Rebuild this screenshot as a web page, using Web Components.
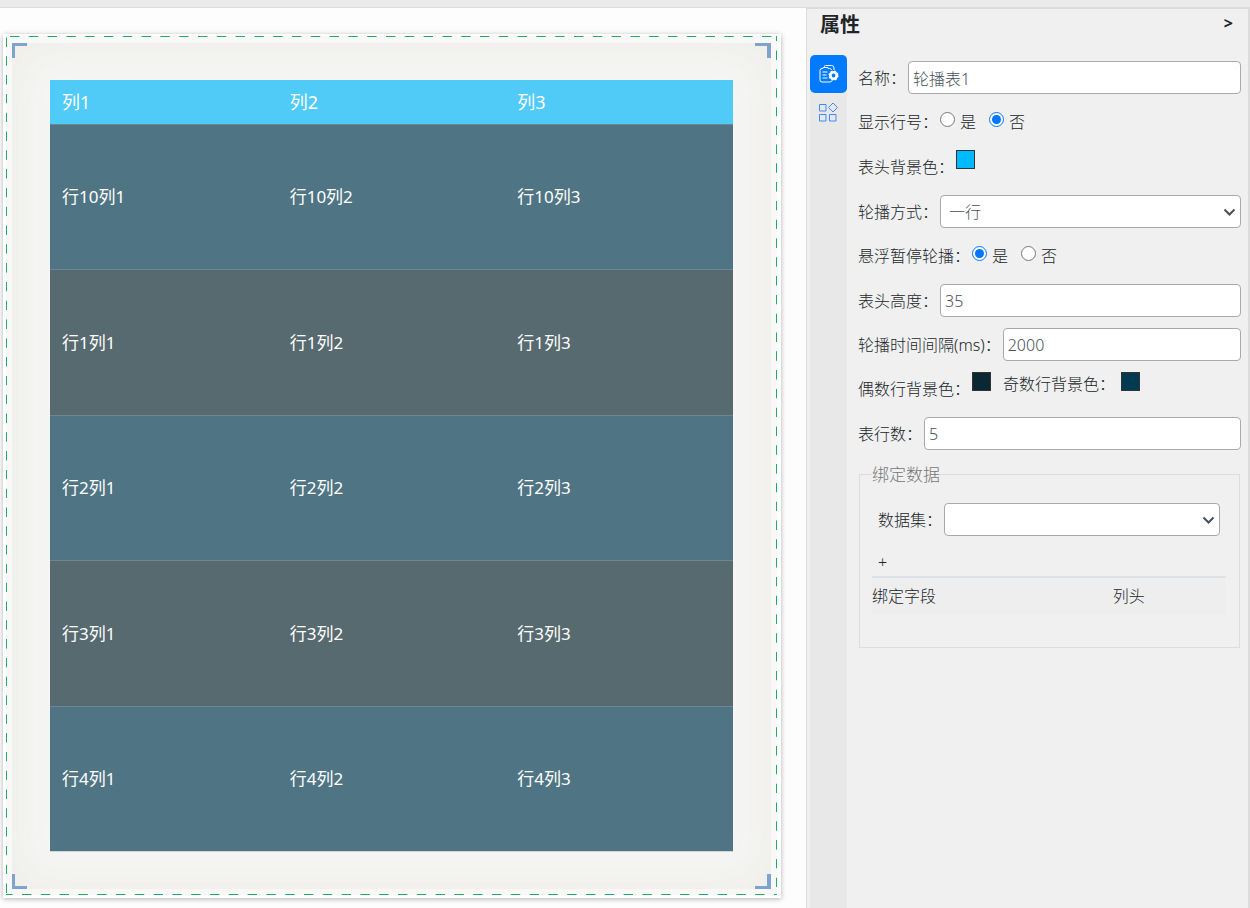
<!DOCTYPE html>
<html lang="zh-CN">
<head>
<meta charset="utf-8">
<title>属性</title>
<style>
  body {
    margin: 0;
    min-height: 100vh;
    display: flex;
    flex-direction: column;
    background: #fdfdfd;
    color: #212529;
    font: 300 16px/24px "Noto Sans", "Noto Sans CJK SC", sans-serif;
  }

  header {
    height: 7px;
    background: #ebebeb;
    border-bottom: 1px solid #dcdcdc;
  }

  main {
    flex: 1;
    display: flex;
  }

  design-canvas {
    flex: 1;
  }
</style>
</head>
<body>
<header></header>
<main>
  <design-canvas>
    <scroll-board></scroll-board>
  </design-canvas>
  <property-panel heading="属性">
    <prop-row label="名称："><prop-input value="轮播表1"></prop-input></prop-row>
    <prop-row label="显示行号："><prop-radio name="显示行号" selected="否"></prop-radio></prop-row>
    <prop-row label="表头背景色："><prop-color label="表头背景色" value="#00baff"></prop-color></prop-row>
    <prop-row label="轮播方式："><prop-select options="一行,整页"></prop-select></prop-row>
    <prop-row label="悬浮暂停轮播："><prop-radio name="悬浮暂停轮播" selected="是"></prop-radio></prop-row>
    <prop-row label="表头高度："><prop-input value="35"></prop-input></prop-row>
    <prop-row label="轮播时间间隔(ms)："><prop-input value="2000"></prop-input></prop-row>
    <prop-row label="偶数行背景色：">
      <prop-color label="偶数行背景色" value="#0a2732"></prop-color>
      <prop-color label="奇数行背景色" caption="奇数行背景色：" value="#003b51"></prop-color>
    </prop-row>
    <prop-row label="表行数："><prop-input value="5"></prop-input></prop-row>
    <bind-data></bind-data>
  </property-panel>
</main>

<script>
class DesignCanvas extends HTMLElement {
  constructor() {
    super();
    this.attachShadow({ mode: 'open' });
  }

  connectedCallback() {
    this.shadowRoot.innerHTML = `
    <style>
      :host { display: block; padding: 26px 25px 10px 3px; }
      .card {
        display: flex;
        background: #fff;
        padding: 2px 4px 3px 3px;
        box-shadow: 0 1px 5px rgba(0, 0, 0, .3);
      }
      .frame {
        flex: 1;
        position: relative;
        padding: 7px 6px 6px;
        background: #f8f8f8;
      }
      .outline {
        position: absolute;
        inset: 0;
        width: 100%;
        height: 100%;
        overflow: hidden;
      }
      .outline line { stroke: #22ac5e; stroke-width: 2; stroke-dasharray: 9.4; }
      .stage {
        position: relative;
        padding: 37px 38px;
        background: #f6f6f5;
        box-shadow: inset 0 0 50px rgba(232, 231, 222, .7);
      }
      .corner {
        position: absolute;
        width: 12px;
        height: 12px;
        border: 0 solid #7fa3cd;
      }
      .tl { top: 0; left: 0; border-width: 3px 0 0 3px; }
      .tr { top: 0; right: 0; border-width: 3px 4px 0 0; }
      .bl { bottom: 0; left: 0; border-width: 0 0 3px 3px; }
      .br { bottom: 0; right: 0; border-width: 0 4px 3px 0; }
    </style>
    <div class="card">
      <div class="frame">
        <svg class="outline" aria-hidden="true">
          <line x1="0" y1="0" x2="100%" y2="0" stroke-dashoffset="-4"/>
          <line x1="0" y1="0" x2="0" y2="100%" stroke-dashoffset="-1.5"/>
          <line x1="100%" y1="0" x2="100%" y2="100%" stroke-dashoffset="-14.5"/>
          <line x1="0" y1="100%" x2="100%" y2="100%" stroke-dashoffset="-16"/>
        </svg>
        <div class="stage">
          <slot></slot>
          <i class="corner tl"></i><i class="corner tr"></i>
          <i class="corner bl"></i><i class="corner br"></i>
        </div>
      </div>
    </div>
    `;
  }
}

class ScrollBoard extends HTMLElement {
  constructor() {
    super();
    this.attachShadow({ mode: 'open' });
  }

  connectedCallback() {
    const columns = [1, 2, 3];
    const rows = [10, 1, 2, 3, 4];
    this.shadowRoot.innerHTML = `
    <style>
      :host { display: block; color: #fff; font-weight: 400; }
      table { width: 100%; table-layout: fixed; border-spacing: 0; }
      th, td { box-sizing: border-box; padding: 0 12px; text-align: left; font-weight: inherit; }
      th { height: 44px; background: #50cbf7; font-size: 18px; }
      td { height: 145px; background: #4f7584; border-top: 1px solid #6b8791; font-size: 17px; }
      tr:nth-child(even) td { height: 146px; background: #576a70; }
      tbody tr:last-child td { height: 146px; border-bottom: 1px solid #cfd6da; }
    </style>
    <table>
      <thead><tr>${columns.map((c) => `<th>列${c}</th>`).join('')}</tr></thead>
      <tbody>
        ${rows.map((r) => `<tr>${columns.map((c) => `<td>行${r}列${c}</td>`).join('')}</tr>`).join('')}
      </tbody>
    </table>
    `;
  }
}

class PropertyPanel extends HTMLElement {
  constructor() {
    super();
    this.attachShadow({ mode: 'open' });
  }

  connectedCallback() {
    this.shadowRoot.innerHTML = `
    <style>
      :host {
        box-sizing: border-box;
        width: 444px;
        display: flex;
        flex-direction: column;
        padding-left: 3px;
        background: #f0f0f0;
        border: solid #dcdcdc;
        border-width: 1px 2px 0 1px;
      }
      .title { display: flex; justify-content: space-between; height: 46px; padding: 0 15px 0 10px; }
      h2 { margin: 0; font-size: 20px; line-height: 32px; }
      button { padding: 0; border: 0; background: none; color: inherit; font: inherit; }
      .fold { align-self: flex-start; font-weight: 700; line-height: 28px; }
      .body { flex: 1; display: flex; }
      nav { width: 37px; background: #e8e8e8; }
      nav button { display: grid; place-items: center; width: 37px; height: 38px; border-radius: 5px; color: #3d8bff; }
      nav button.active { background: #007bff; color: #fff; }
      svg { display: block; fill: none; stroke: currentColor; }
      .fields { flex: 1; display: flex; flex-direction: column; gap: 11px; padding: 6px 7px 0 11px; }
    </style>
    <div class="title">
      <h2>${this.getAttribute('heading')}</h2>
      <button class="fold" type="button">&gt;</button>
    </div>
    <div class="body">
      <nav>
        <button class="active" type="button" aria-label="属性">
          <svg width="20" height="20" viewBox="1 0 20 20">
            <path d="M5 4.500h-1a2 2 0 0 0-2 2v9.500a2 2 0 0 0 2 2h8a2 2 0 0 0 2-1.500M5 4.500V3.500h5v1h1.500a2 2 0 0 1 2 1.500M6.500 3V2.500a1 1 0 0 1 1-1h6a2.500 2.500 0 0 1 2.500 2.500v2M4.500 8h5M4.500 11h4M4.500 14h5"/>
            <circle cx="15.500" cy="11.500" r="3.200" stroke-width="2.600"/>
            <circle cx="15.500" cy="11.500" r="4.500" stroke-width="1.200" stroke-dasharray="2 1.534"/>
          </svg>
        </button>
        <button type="button" aria-label="组件">
          <svg width="20" height="20" viewBox="1 1 20 20">
            <path d="M1.500 3.500h6.500v6.500h-6.500zM1.500 13.500h6.500v6.500h-6.500zM11.500 13.500h6.500v6.500h-6.500zM15 2l4.500 4.500-4.500 4.500-4.500-4.500z"/>
          </svg>
        </button>
      </nav>
      <div class="fields"><slot></slot></div>
    </div>
    `;
  }
}

class PropRow extends HTMLElement {
  constructor() {
    super();
    this.attachShadow({ mode: 'open' });
  }

  connectedCallback() {
    const label = this.getAttribute('label');
    this.shadowRoot.innerHTML = `
    <style>
      :host { display: flex; align-items: center; gap: 2px; min-height: 33px; }
      label { white-space: nowrap; }
    </style>
    <label>${label}</label>
    <slot></slot>
    `;
    // a label cannot point across shadow roots, so name the control by hand
    this.shadowRoot.querySelector('label').addEventListener('click', () => {
      this.firstElementChild.shadowRoot.querySelector('input, select').focus();
    });
    this.querySelectorAll('prop-input, prop-select').forEach((field) => {
      field.setAttribute('label', label.replace('：', ''));
    });
  }
}

class PropInput extends HTMLElement {
  static observedAttributes = ['label'];

  constructor() {
    super();
    this.attachShadow({ mode: 'open' });
  }

  connectedCallback() {
    this.render();
  }

  attributeChangedCallback() {
    this.render();
  }

  render() {
    this.shadowRoot.innerHTML = `
    <style>
      :host { flex: 1; display: flex; min-width: 0; }
      input {
        box-sizing: border-box;
        width: 100%;
        height: 33px;
        padding: 0 4px;
        border: 1px solid #aaa;
        border-radius: 4px;
        background: #fff;
        color: #495057;
        font: inherit;
      }
    </style>
    <input type="text" aria-label="${this.getAttribute('label')}" value="${this.getAttribute('value')}">
    `;
  }
}

class PropSelect extends HTMLElement {
  static observedAttributes = ['label'];

  constructor() {
    super();
    this.attachShadow({ mode: 'open' });
  }

  connectedCallback() {
    this.render();
  }

  attributeChangedCallback() {
    this.render();
  }

  render() {
    const options = this.getAttribute('options').split(',');
    this.shadowRoot.innerHTML = `
    <style>
      :host { flex: 1; display: grid; align-items: center; min-width: 0; }
      select, svg { grid-area: 1 / 1; }
      select {
        appearance: none;
        box-sizing: border-box;
        width: 100%;
        height: 33px;
        padding: 0 8px;
        border: 1px solid #aaa;
        border-radius: 4px;
        background: #fff;
        color: #495057;
        font: inherit;
      }
      svg { justify-self: end; margin-right: 5px; pointer-events: none; }
    </style>
    <select aria-label="${this.getAttribute('label')}">
      ${options.map((o) => `<option>${o}</option>`).join('')}
    </select>
    <svg width="13" height="8" viewBox="0 0 13 8" fill="none" stroke="#495057" stroke-width="2"><path d="M1.500 1.500l5 5 5-5"/></svg>
    `;
  }
}

class PropRadio extends HTMLElement {
  constructor() {
    super();
    this.attachShadow({ mode: 'open' });
  }

  connectedCallback() {
    const selected = this.getAttribute('selected');
    const name = this.getAttribute('name');
    this.shadowRoot.innerHTML = `
    <style>
      :host { display: flex; align-items: center; gap: 13px; height: 34px; }
      label { display: flex; align-items: center; gap: 5px; }
      input { width: 15px; height: 15px; margin: 0 0 5px; accent-color: #0075ff; }
    </style>
    ${['是', '否'].map((v) => `
      <label><input type="radio" name="${name}" ${v === selected ? 'checked' : ''}>${v}</label>
    `).join('')}
    `;
  }
}

class PropColor extends HTMLElement {
  constructor() {
    super();
    this.attachShadow({ mode: 'open' });
  }

  connectedCallback() {
    const caption = this.getAttribute('caption');
    this.shadowRoot.innerHTML = `
    <style>
      :host { display: flex; align-items: flex-start; height: 34px; gap: 6px; }
      :host([caption]) { margin-left: 10px; }
      input {
        appearance: none;
        width: 19px;
        height: 19px;
        padding: 0;
        border: 1px solid #333;
        background: none;
      }
      input::-webkit-color-swatch-wrapper { padding: 0; }
      input::-webkit-color-swatch { border: 0; border-radius: 0; }
    </style>
    ${caption ? `<label for="color">${caption}</label>` : ''}
    <input id="color" type="color" aria-label="${this.getAttribute('label')}" value="${this.getAttribute('value')}">
    `;
  }
}

class BindData extends HTMLElement {
  constructor() {
    super();
    this.attachShadow({ mode: 'open' });
  }

  connectedCallback() {
    this.shadowRoot.innerHTML = `
    <style>
      :host { display: block; }
      fieldset { margin: 0 1px; padding: 16px 13px 33px 12px; border: 1px solid #ddd; min-width: 0; }
      legend { padding: 2px 0 0; color: #777; font-size: 17px; }
      prop-row { padding: 0 6px; }
      button { display: block; margin: 12px 0 0; padding: 0 6px; border: 0; background: none; color: inherit; font: inherit; line-height: 28px; }
      table { width: 100%; border-spacing: 0; border-top: 2px solid #dee2e6; background: #eee; }
      th { padding: 6px 0; font-weight: inherit; text-align: left; }
      th:first-child { width: 68%; }
    </style>
    <fieldset>
      <legend>绑定数据</legend>
      <prop-row label="数据集："><prop-select options=""></prop-select></prop-row>
      <button type="button">+</button>
      <table>
        <thead><tr><th>绑定字段</th><th>列头</th></tr></thead>
      </table>
    </fieldset>
    `;
  }
}

customElements.define('design-canvas', DesignCanvas);
customElements.define('scroll-board', ScrollBoard);
customElements.define('property-panel', PropertyPanel);
customElements.define('prop-input', PropInput);
customElements.define('prop-select', PropSelect);
customElements.define('prop-radio', PropRadio);
customElements.define('prop-color', PropColor);
customElements.define('prop-row', PropRow);
customElements.define('bind-data', BindData);
</script>
</body>
</html>
